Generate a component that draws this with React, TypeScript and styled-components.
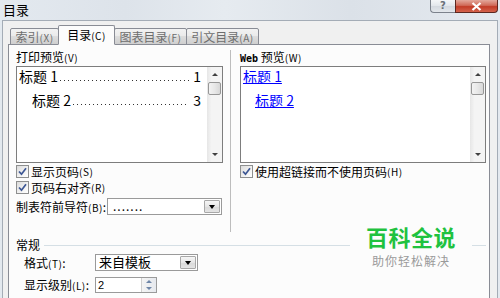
import React from 'react';
import styled, { createGlobalStyle } from 'styled-components';

const GlobalStyle = createGlobalStyle`
  html, body {
    margin: 0;
    padding: 0;
  }
  body {
    width: 500px;
    height: 298px;
    overflow: hidden;
    font-family: "Noto Sans CJK SC", "Noto Sans", sans-serif;
    font-size: 12px;
    color: #000;
  }
`;

const tabs = [
  { label: '索引', key: 'X', width: 49 },
  { label: '目录', key: 'C', width: 57, active: true },
  { label: '图表目录', key: 'F', width: 73 },
  { label: '引文目录', key: 'A', width: 73 },
];

const Check: React.FC<{ label: string; hotkey: string }> = ({ label, hotkey }) => (
  <CheckRow>
    <CheckBox>
      <svg width="11" height="11" viewBox="0 0 11 11">
        <path d="M2 5.5 L4.5 8.2 L9 2.2" fill="none" stroke="#3d5794" strokeWidth="1.7" />
      </svg>
    </CheckBox>
    {label}
    <Key>({hotkey})</Key>
  </CheckRow>
);

const Scrollbar: React.FC = () => (
  <ScrollTrack>
    <Arrow $up />
    <Thumb />
    <Spacer />
    <Arrow />
  </ScrollTrack>
);

const App: React.FC = () => {
  return (
    <>
      <GlobalStyle />
      <Window>
        <TitleBar>
          <Title>目录</Title>
          <Caption>
            <HelpButton>?</HelpButton>
            <CloseButton>
              <svg width="11" height="9" viewBox="0 0 11 9">
                <path d="M1.5 1 L9.5 8 M9.5 1 L1.5 8" stroke="#fff" strokeWidth="2.2" />
              </svg>
            </CloseButton>
          </Caption>
        </TitleBar>

        <Client>
          <TabStrip>
            {tabs.map((t) => (
              <Tab key={t.key} $active={t.active} $width={t.width}>
                {t.label}
                <Key>({t.key})</Key>
              </Tab>
            ))}
          </TabStrip>

          <Panel>
            <Columns>
              <LeftColumn>
                <Caption2>
                  打印预览<Key>(V)</Key>
                </Caption2>
                <PreviewBox>
                  <PreviewContent>
                    <TocLine>
                      <span>标题 1</span>
                      <Leader />
                      <span>1</span>
                    </TocLine>
                    <TocLine $indent>
                      <span>标题 2</span>
                      <Leader />
                      <span>3</span>
                    </TocLine>
                  </PreviewContent>
                  <Scrollbar />
                </PreviewBox>
                <Check label="显示页码" hotkey="S" />
                <Check label="页码右对齐" hotkey="R" />
                <FieldRow>
                  <FieldLabel $width={91}>
                    制表符前导符<Key>(B)</Key>:
                  </FieldLabel>
                  <Combo $width={115}>
                    <ComboText>.......</ComboText>
                    <ComboButton>
                      <DownTriangle />
                    </ComboButton>
                  </Combo>
                </FieldRow>
              </LeftColumn>

              <Separator />

              <RightColumn>
                <Caption2>
                  <Mono>Web</Mono> 预览<Key>(W)</Key>
                </Caption2>
                <PreviewBox>
                  <PreviewContent>
                    <LinkLine>标题 1</LinkLine>
                    <LinkLine $indent>标题 2</LinkLine>
                  </PreviewContent>
                  <Scrollbar />
                </PreviewBox>
                <Check label="使用超链接而不使用页码" hotkey="H" />
              </RightColumn>
            </Columns>

            <GroupHeader>常规</GroupHeader>
            <GroupRow>
              <FieldLabel $width={71}>
                格式<Key>(T)</Key>:
              </FieldLabel>
              <Combo $width={103}>
                <ComboText $large>来自模板</ComboText>
                <ComboButton>
                  <DownTriangle />
                </ComboButton>
              </Combo>
            </GroupRow>
            <GroupRow $gap={5}>
              <FieldLabel $width={71}>
                显示级别<Key>(L)</Key>:
              </FieldLabel>
              <Spin>
                <SpinText>2</SpinText>
                <SpinButtons>
                  <SpinArrow $up />
                  <SpinArrow />
                </SpinButtons>
              </Spin>
            </GroupRow>
          </Panel>
        </Client>

        <Watermark>
          <Brand>百科全说</Brand>
          <Slogan>助你轻松解决</Slogan>
        </Watermark>
      </Window>
    </>
  );
};

const Window = styled.div`
  position: relative;
  width: 500px;
  height: 298px;
  display: flex;
  flex-direction: column;
  background: linear-gradient(90deg, #e3e9ef 0%, #dde3ea 25%, #e6ebf0 45%, #dbe1e8 70%, #e4e9ef 100%);
  overflow: hidden;
`;

const TitleBar = styled.div`
  height: 20px;
  display: flex;
  justify-content: space-between;
  align-items: flex-start;
  padding-left: 3px;
  flex-shrink: 0;
`;

const Title = styled.div`
  font-size: 13px;
  line-height: 19px;
  color: #000;
`;

const Caption = styled.div`
  display: flex;
  margin-right: 2px;
`;

const HelpButton = styled.div`
  width: 24px;
  height: 12px;
  border: 1px solid #7c828c;
  border-top: none;
  border-right: none;
  border-radius: 0 0 0 4px;
  background: linear-gradient(#f4f6f8, #e2e6eb 50%, #d3d8df 51%, #e3e7ec);
  color: #6a6f78;
  font-family: "DejaVu Sans", sans-serif;
  font-size: 10px;
  font-weight: bold;
  line-height: 12px;
  text-align: center;
`;

const CloseButton = styled.div`
  width: 41px;
  height: 12px;
  border: 1px solid #5c2720;
  border-top: none;
  border-radius: 0 0 4px 0;
  background: linear-gradient(#e3a89c, #d06a58 45%, #c23c27 55%, #d4624c);
  display: flex;
  align-items: center;
  justify-content: center;
`;

const Client = styled.div`
  flex: 1;
  margin: 0 2px;
  border: 1px solid #a4acb6;
  border-bottom: none;
  background: #f0f0f0;
  padding: 4px 7px 0 5px;
  display: flex;
  flex-direction: column;
  min-height: 0;
`;

const TabStrip = styled.div`
  display: flex;
  align-items: flex-end;
  padding-left: 2px;
  margin-bottom: -1px;
  position: relative;
  z-index: 1;
`;

const Tab = styled.div<{ $active?: boolean; $width: number }>`
  box-sizing: border-box;
  width: ${(p) => p.$width}px;
  height: ${(p) => (p.$active ? 20 : 17)}px;
  margin-left: -1px;
  border: 1px solid #898c95;
  border-bottom: ${(p) => (p.$active ? '1px solid #fcfcfc' : '1px solid #898c95')};
  border-radius: 2px 2px 0 0;
  background: ${(p) =>
    p.$active ? '#fcfcfc' : 'linear-gradient(#f2f2f2, #ebebeb 45%, #dddddd 50%, #cfcfcf)'};
  color: ${(p) => (p.$active ? '#000' : '#6e6e6e')};
  font-size: 12px;
  line-height: ${(p) => (p.$active ? 18 : 15)}px;
  text-align: center;
  white-space: nowrap;
  position: relative;
  z-index: ${(p) => (p.$active ? 2 : 1)};
  &:first-child {
    margin-left: 0;
  }
`;

const Key = styled.span`
  font-size: 10px;
  letter-spacing: 0.5px;
`;

const Mono = styled.span`
  font-family: "DejaVu Sans Mono", monospace;
  font-size: 10px;
  font-weight: bold;
`;

const Panel = styled.div`
  flex: 1;
  background: #fcfcfc;
  border: 1px solid #898c95;
  border-bottom: none;
  padding: 5px 3px 0 7px;
  display: flex;
  flex-direction: column;
`;

const Columns = styled.div`
  display: flex;
  height: 182px;
`;

const LeftColumn = styled.div`
  width: 207px;
  display: flex;
  flex-direction: column;
`;

const RightColumn = styled.div`
  width: 246px;
  display: flex;
  flex-direction: column;
`;

const Separator = styled.div`
  width: 1px;
  background: #bdbdbd;
  margin: 0 9px 0 7px;
`;

const Caption2 = styled.div`
  height: 14px;
  line-height: 14px;
  white-space: nowrap;
`;

const PreviewBox = styled.div`
  box-sizing: border-box;
  height: 97px;
  margin-top: 2px;
  border: 1px solid #7d7d7d;
  background: #fff;
  display: flex;
`;

const PreviewContent = styled.div`
  flex: 1;
  padding: 1px 6px 0 2px;
  font-size: 14px;
  line-height: 16px;
`;

const TocLine = styled.div<{ $indent?: boolean }>`
  display: flex;
  white-space: nowrap;
  padding-left: ${(p) => (p.$indent ? 13 : 0)}px;
  margin-top: ${(p) => (p.$indent ? 8 : 0)}px;
`;

const Leader = styled.span`
  flex: 1;
  margin: 0 4px 0 2px;
  background-image: linear-gradient(90deg, #333 1px, transparent 1px);
  background-size: 4px 1px;
  background-repeat: repeat-x;
  background-position: 0 12px;
`;

const LinkLine = styled.div<{ $indent?: boolean }>`
  color: #0000ff;
  text-decoration: underline;
  padding-left: ${(p) => (p.$indent ? 12 : 0)}px;
  margin-top: ${(p) => (p.$indent ? 8 : 0)}px;
`;

const ScrollTrack = styled.div`
  width: 15px;
  background: linear-gradient(90deg, #e6e6e6, #f4f4f4 30%, #f4f4f4);
  display: flex;
  flex-direction: column;
  align-items: center;
`;

const Arrow = styled.div<{ $up?: boolean }>`
  width: 0;
  height: 0;
  margin: 6px 0;
  border-left: 3px solid transparent;
  border-right: 3px solid transparent;
  ${(p) => (p.$up ? 'border-bottom: 3px solid #404040;' : 'border-top: 3px solid #404040;')}
`;

const Thumb = styled.div`
  box-sizing: border-box;
  width: 13px;
  height: 13px;
  border: 1px solid #979797;
  border-radius: 2px;
  background: linear-gradient(90deg, #f3f3f3, #e8e8e8 50%, #d8d8d8);
`;

const Spacer = styled.div`
  flex: 1;
`;

const CheckRow = styled.div`
  display: flex;
  align-items: center;
  height: 15px;
  margin-top: 1px;
  white-space: nowrap;
  &:first-of-type {
    margin-top: 2px;
  }
`;

const CheckBox = styled.div`
  box-sizing: border-box;
  width: 13px;
  height: 13px;
  margin-right: 2px;
  border: 1px solid #8e8f8f;
  background: linear-gradient(135deg, #dcdcdc, #f6f6f6 70%, #fff);
  display: flex;
  align-items: center;
  justify-content: center;
`;

const FieldRow = styled.div`
  display: flex;
  align-items: center;
  margin-top: 3px;
`;

const FieldLabel = styled.div<{ $width: number }>`
  width: ${(p) => p.$width}px;
  white-space: nowrap;
  flex-shrink: 0;
`;

const Combo = styled.div<{ $width: number }>`
  box-sizing: border-box;
  width: ${(p) => p.$width}px;
  height: 17px;
  border: 1px solid #9a9a9a;
  background: #fff;
  display: flex;
  align-items: stretch;
`;

const ComboText = styled.div<{ $large?: boolean }>`
  flex: 1;
  padding-left: ${(p) => (p.$large ? 3 : 5)}px;
  font-size: ${(p) => (p.$large ? 13 : 12)}px;
  line-height: 14px;
  letter-spacing: ${(p) => (p.$large ? 0 : 1)}px;
`;

const ComboButton = styled.div`
  box-sizing: border-box;
  width: 16px;
  margin: 1px;
  border: 1px solid #a8a8a8;
  border-radius: 1px;
  background: linear-gradient(#f6f6f6, #e6e6e6 50%, #d9d9d9 51%, #e4e4e4);
  display: flex;
  align-items: center;
  justify-content: center;
`;

const DownTriangle = styled.div`
  width: 0;
  height: 0;
  border-left: 3px solid transparent;
  border-right: 3px solid transparent;
  border-top: 4px solid #000;
`;

const GroupHeader = styled.div`
  display: flex;
  align-items: center;
  height: 14px;
  line-height: 14px;
  margin-top: 6px;
  &::after {
    content: '';
    flex: 1;
    height: 1px;
    margin-left: 4px;
    background: #d5dfe5;
  }
`;

const GroupRow = styled.div<{ $gap?: number }>`
  display: flex;
  align-items: center;
  padding-left: 8px;
  margin-top: ${(p) => p.$gap ?? 2}px;
`;

const Spin = styled.div`
  box-sizing: border-box;
  width: 62px;
  height: 16px;
  border: 1px solid #9a9a9a;
  background: #fff;
  display: flex;
`;

const SpinText = styled.div`
  flex: 1;
  padding-left: 2px;
  font-family: "Liberation Sans", sans-serif;
  font-size: 11px;
  line-height: 14px;
`;

const SpinButtons = styled.div`
  width: 14px;
  display: flex;
  flex-direction: column;
  align-items: center;
  justify-content: space-around;
  background: linear-gradient(90deg, #f4f4f4, #e6e9ee);
  border-left: 1px solid #d0d0d0;
`;

const SpinArrow = styled.div<{ $up?: boolean }>`
  width: 0;
  height: 0;
  border-left: 3px solid transparent;
  border-right: 3px solid transparent;
  ${(p) => (p.$up ? 'border-bottom: 3px solid #6f86a8;' : 'border-top: 3px solid #6f86a8;')}
`;

const Watermark = styled.div`
  position: absolute;
  left: 350px;
  top: 219px;
  width: 122px;
  padding: 1px 0 2px;
  background: #fcfcfc;
  display: flex;
  flex-direction: column;
  align-items: center;
`;

const Brand = styled.div`
  color: #1fc23f;
  font-size: 22px;
  font-weight: bold;
  line-height: 32px;
  letter-spacing: 0.5px;
`;

const Slogan = styled.div`
  color: #9a9a9a;
  font-size: 12px;
  line-height: 18px;
  letter-spacing: 1px;
`;

export default App;
